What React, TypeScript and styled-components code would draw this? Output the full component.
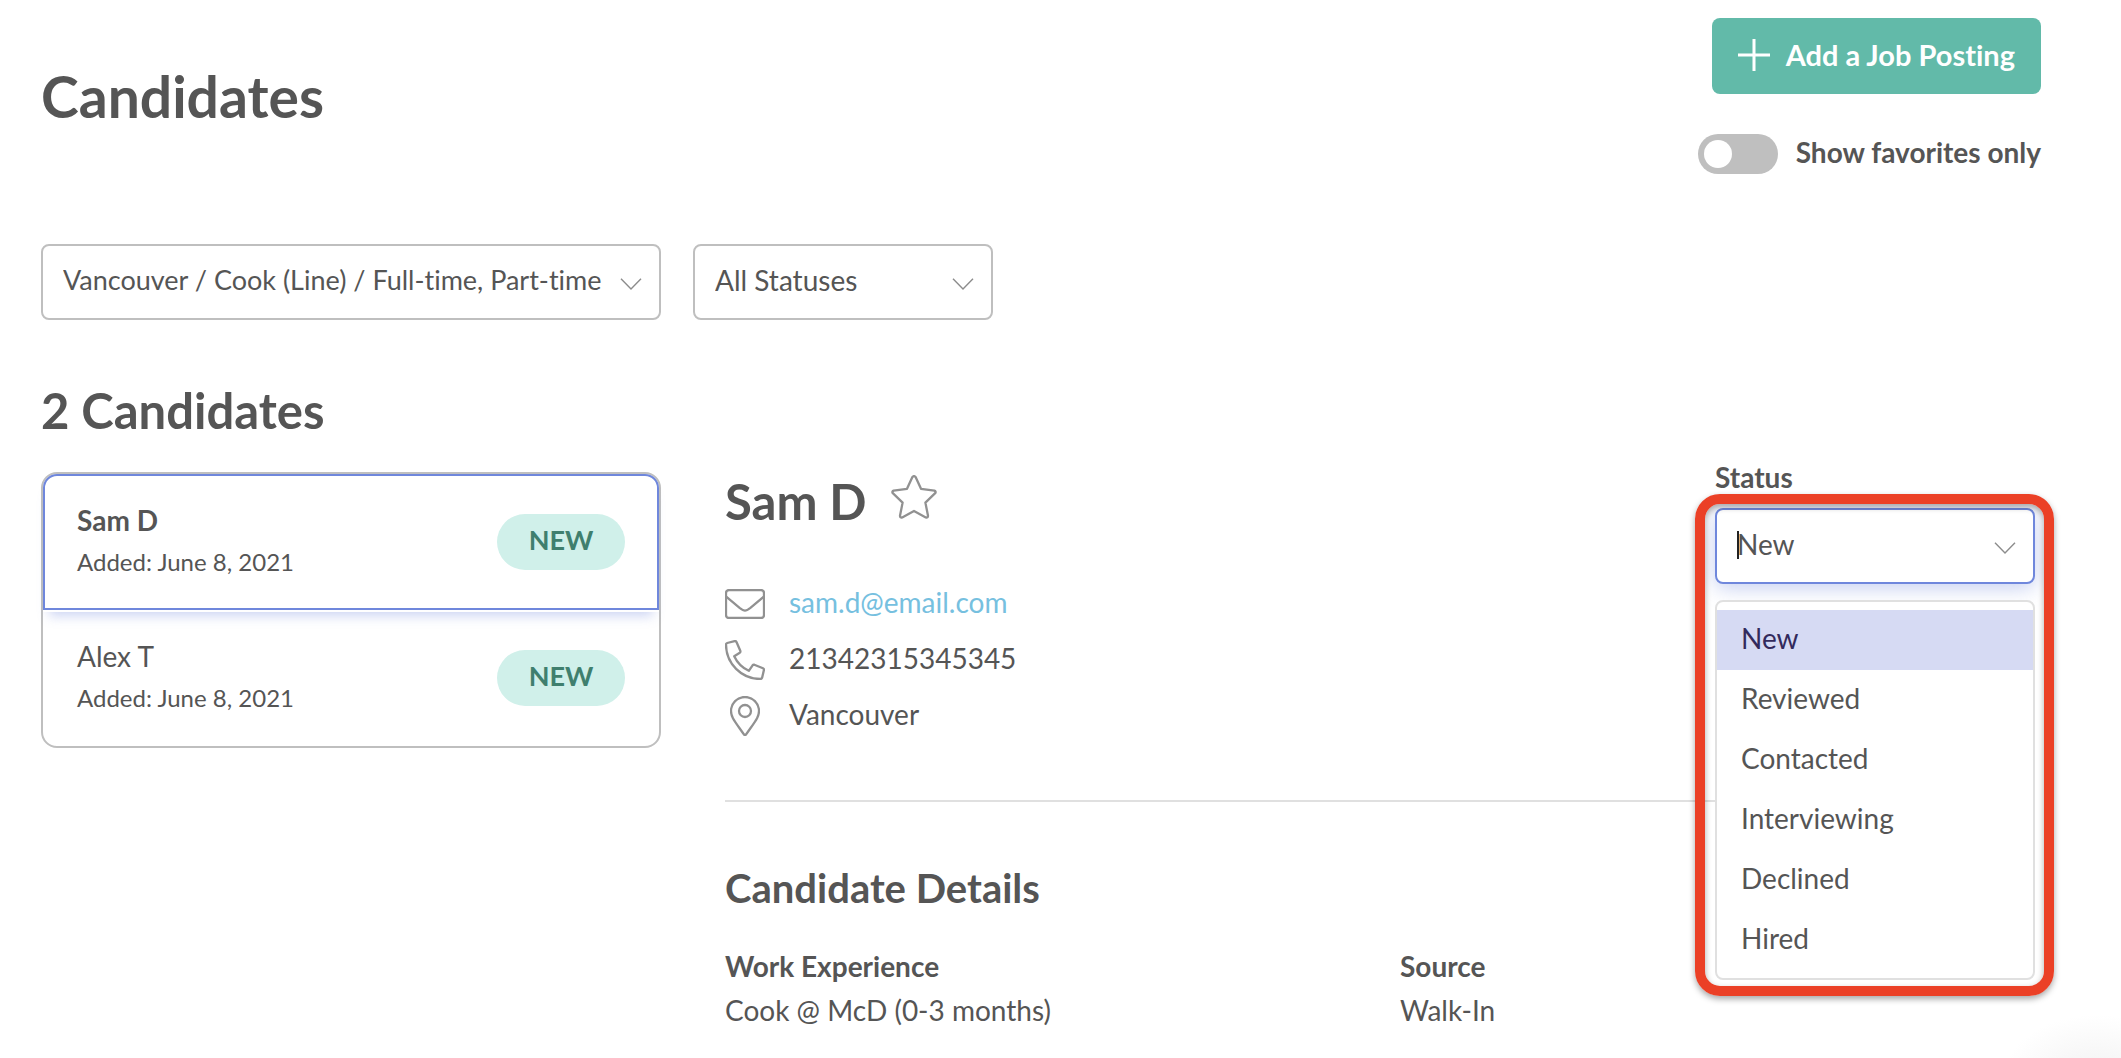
import React, { useState } from "react";
import styled, { createGlobalStyle, css } from "styled-components";

const color = {
  text: "#555555",
  border: "#bfbfbf",
  line: "#e0e0e0",
  icon: "#919191",
  blue: "#6f87dc",
  green: "#62baa9",
  link: "#76c0df",
};

const GlobalStyle = createGlobalStyle`
  *, *::before, *::after { box-sizing: border-box; }
  body {
    margin: 0;
    background: #fff;
    color: ${color.text};
    font-family: Lato, "Liberation Sans", sans-serif;
    font-size: 28px;
    line-height: 36px;
    font-variant-ligatures: no-common-ligatures;
  }
  h1, h2, h3, p, ul, dl, dd { margin: 0; padding: 0; }
  ul { list-style: none; }
  button, input, select { font: inherit; color: inherit; font-variant-ligatures: inherit; }
`;

const Page = styled.div`
  position: relative;
  min-height: 100vh;
  padding: 18px 80px 16px 41px;
  overflow: hidden;
`;

const Header = styled.header`
  display: flex;
  justify-content: space-between;
  align-items: flex-start;
`;

const Title = styled.h1`
  padding-top: 44px;
  font-size: 57px;
  line-height: 68px;
  font-weight: 700;
`;

const Actions = styled.div`
  display: flex;
  flex-direction: column;
  align-items: flex-end;
  gap: 40px;
`;

const AddButton = styled.button`
  display: flex;
  align-items: center;
  gap: 16px;
  height: 76px;
  padding: 0 26px 2px;
  border: 0;
  border-radius: 8px;
  background: ${color.green};
  color: #fff;
  font-size: 29px;
  font-weight: 700;
  cursor: pointer;
`;

const ToggleLabel = styled.label`
  display: flex;
  align-items: center;
  gap: 18px;
  height: 40px;
  font-weight: 700;
  cursor: pointer;
`;

const ToggleText = styled.span`
  padding-bottom: 4px;
`;

const Toggle = styled.input`
  appearance: none;
  display: flex;
  align-items: center;
  width: 80px;
  height: 40px;
  margin: 0;
  padding: 0 6px;
  border-radius: 20px;
  background: ${color.border};
  cursor: pointer;

  &::before {
    content: "";
    width: 28px;
    height: 28px;
    border-radius: 50%;
    background: #fff;
  }
  &:checked {
    justify-content: flex-end;
    background: ${color.green};
  }
`;

const Filters = styled.div`
  display: flex;
  gap: 32px;
  margin-top: 70px;
`;

const control = css`
  width: 100%;
  height: 76px;
  border: 2px solid ${color.border};
  border-radius: 8px;
  background: #fff;
  outline: none;
`;

const SelectBox = styled.div<{ $width: string }>`
  display: grid;
  align-items: center;
  width: ${(p) => p.$width};

  > * { grid-area: 1 / 1; }
  > svg {
    justify-self: end;
    margin: 4px 19px 0 0;
    pointer-events: none;
  }
`;

const Select = styled.select<{ $compact?: boolean }>`
  ${control}
  appearance: none;
  padding: 0 44px 4px 20px;
  font-size: ${(p) => (p.$compact ? 27 : 28)}px;
  cursor: pointer;
`;

const Columns = styled.main`
  display: grid;
  grid-template-columns: 31% minmax(0, 1fr);
  column-gap: 64px;
  margin-top: 60px;
`;

const Heading = styled.h2`
  font-size: 49px;
  line-height: 60px;
  font-weight: 700;
`;

const List = styled.ul`
  margin-top: 32px;
  border: 2px solid ${color.border};
  border-radius: 16px;
`;

const Card = styled.button<{ $selected: boolean }>`
  display: flex;
  align-items: center;
  justify-content: space-between;
  width: 100%;
  height: 136px;
  padding: 0 32px;
  border: 2px solid transparent;
  border-radius: 14px;
  background: transparent;
  text-align: left;
  cursor: pointer;

  ${(p) =>
    p.$selected &&
    css`
      border-color: ${color.blue};
      border-radius: 14px 14px 0 0;
      box-shadow: 0 2px 0 #fff, 0 12px 12px -6px rgba(111, 135, 220, 0.35);
    `}
`;

const CardText = styled.span`
  display: flex;
  flex-direction: column;
  gap: 6px;
  padding-bottom: 3px;
`;

const CardName = styled.span<{ $bold: boolean }>`
  font-weight: ${(p) => (p.$bold ? 700 : 400)};
`;

const CardDate = styled.span`
  font-size: 24px;
`;

const Badge = styled.span`
  display: flex;
  align-items: center;
  justify-content: center;
  width: 128px;
  height: 56px;
  padding-bottom: 4px;
  border-radius: 28px;
  background: #d0f0ea;
  color: #3f7f6e;
  font-size: 27px;
  font-weight: 700;
`;

const Detail = styled.section`
  padding: 80px 6px 0 0;
`;

const DetailTop = styled.div`
  display: flex;
  justify-content: space-between;
  align-items: flex-start;
  height: 340px;
`;

const NameRow = styled.div`
  display: flex;
  align-items: flex-start;
  gap: 24px;
  padding-top: 11px;
`;

const StarButton = styled.button`
  display: flex;
  padding: 4px 0 0;
  border: 0;
  background: none;
  cursor: pointer;
`;

const Contacts = styled.ul`
  display: flex;
  flex-direction: column;
  margin-top: 45px;
`;

const Contact = styled.li`
  display: grid;
  grid-template-columns: 40px auto;
  justify-items: center;
  align-items: center;
  column-gap: 24px;
  height: 56px;

  > :last-child {
    justify-self: start;
    padding-bottom: 4px;
  }
`;

const MailLink = styled.a`
  color: ${color.link};
  text-decoration: none;
`;

const StatusField = styled.div`
  position: relative;
  width: 320px;
`;

const StatusLabel = styled.label`
  display: block;
  height: 48px;
  line-height: 34px;
  font-size: 28px;
  font-weight: 700;
`;

const StatusInput = styled.input`
  ${control}
  border-color: ${color.blue};
  padding: 0 56px 4px 20px;
  box-shadow: 0 4px 20px rgba(111, 135, 220, 0.4);
`;

const Caret = styled.span`
  width: 2px;
  height: 28px;
  margin: 0 0 2px 22px;
  background: #222;
`;

const Menu = styled.ul`
  position: absolute;
  z-index: 2;
  top: calc(100% + 16px);
  left: 0;
  right: 0;
  padding: 8px 0;
  border: 2px solid ${color.line};
  border-radius: 8px;
  background: #fff;
`;

const Option = styled.li<{ $active: boolean }>`
  height: 60px;
  padding: 0 24px;
  line-height: 56px;
  background: ${(p) => (p.$active ? "#d6daf3" : "transparent")};
  color: ${(p) => (p.$active ? "#332a5c" : "inherit")};
  cursor: pointer;
`;

const Highlight = styled.div`
  position: absolute;
  z-index: 3;
  top: 34px;
  left: -20px;
  right: -19px;
  height: 502px;
  border: 10px solid #eb4026;
  border-radius: 25px;
  box-shadow: 0 3px 6px rgba(0, 0, 0, 0.35), inset 0 3px 6px rgba(0, 0, 0, 0.35);
  pointer-events: none;
`;

const Details = styled.section`
  border-top: 2px solid ${color.line};
  padding-top: 61px;
`;

const SubHeading = styled.h3`
  font-size: 40px;
  line-height: 50px;
  font-weight: 700;
`;

const Facts = styled.dl`
  display: grid;
  grid-template-columns: 1fr 1fr;
  column-gap: 40px;
  margin-top: 31px;
`;

const Fact = styled.div`
  line-height: 44px;
`;

const Term = styled.dt`
  font-weight: 700;
`;

const CornerShade = styled.div`
  position: absolute;
  right: 0;
  bottom: 0;
  width: 140px;
  height: 60px;
  background: radial-gradient(95px 68px at 115px 85px, #f1f1f1, #fff);
`;

const Chevron = () => (
  <svg width="22" height="12" viewBox="0 0 22 12" fill="none" stroke="#8c8c8c" strokeWidth="1.4" aria-hidden="true">
    <path d="M1 0.8 11 11 21 0.8" />
  </svg>
);

const Plus = () => (
  <svg width="32" height="32" viewBox="0 0 32 32" stroke="#fff" strokeWidth="3" aria-hidden="true">
    <path d="M16 0v32M0 16h32" />
  </svg>
);

const outline = { fill: "none", stroke: color.icon, strokeWidth: 2.3, strokeLinejoin: "round" as const };

const Star = () => (
  <svg width="46" height="44" viewBox="0 0 46 44" {...outline} aria-hidden="true">
    <path d="M21.4 2Q23 .2 24.6 2L30 13.8 43.4 15.6Q45.4 16.6 44.2 18.2L34.4 27.6 37 40.8Q36.8 43 34.8 42.4L23 36 11.2 42.4Q9.2 43 9 40.8L11.6 27.6 1.8 18.2Q.6 16.6 2.6 15.6L16 13.8Z" />
  </svg>
);

const Envelope = () => (
  <svg width="40" height="30" viewBox="0 0 40 30" {...outline} aria-hidden="true">
    <rect x="1" y="1" width="38" height="28" rx="3" />
    <path d="M1.2 7.6 14.6 18.8C17.4 21 18.8 21.6 20 21.6S22.6 21 25.4 18.8L38.8 7.6" />
  </svg>
);

const Phone = () => (
  <svg width="40" height="40" viewBox="0 0 40 40" {...outline} aria-hidden="true">
    <path d="M2.2 3 9.6 1.1Q11 .8 11.6 2.2L15.3 10.8Q15.7 12 14.8 12.7L9.2 16.2C12.4 23 17 27.6 23.8 30.8L27.6 25.3Q28.3 24.4 29.3 24.7L38 28.3Q39.2 28.9 38.9 30.1L37.1 37.7Q36.7 39 35.4 39C16.4 39 1 23.6 1 4.6Q1 3.4 2.2 3Z" />
  </svg>
);

const Pin = () => (
  <svg width="30" height="40" viewBox="0 0 30 40" {...outline} aria-hidden="true">
    <path d="M13.9 38.4C4 24.2 1 21 1 15a14 14 0 0 1 28 0c0 6-3 9.2-12.9 23.4Q15 39.6 13.9 38.4Z" />
    <circle cx="15" cy="15" r="6" />
  </svg>
);

const candidates = [
  { name: "Sam D", added: "June 8, 2021", status: "NEW" },
  { name: "Alex T", added: "June 8, 2021", status: "NEW" },
];

const statuses = ["New", "Reviewed", "Contacted", "Interviewing", "Declined", "Hired"];

export default function App() {
  const [selected, setSelected] = useState(0);
  const [status, setStatus] = useState("New");

  return (
    <>
      <GlobalStyle />
      <Page>
        <CornerShade />
        <Header>
          <Title>Candidates</Title>
          <Actions>
            <AddButton type="button">
              <Plus />
              Add a Job Posting
            </AddButton>
            <ToggleLabel>
              <Toggle type="checkbox" role="switch" />
              <ToggleText>Show favorites only</ToggleText>
            </ToggleLabel>
          </Actions>
        </Header>

        <Filters>
          <SelectBox $width="31%">
            <Select aria-label="Job posting" $compact>
              <option>Vancouver / Cook (Line) / Full-time, Part-time</option>
            </Select>
            <Chevron />
          </SelectBox>
          <SelectBox $width="15%">
            <Select aria-label="Candidate status">
              <option>All Statuses</option>
            </Select>
            <Chevron />
          </SelectBox>
        </Filters>

        <Columns>
          <section>
            <Heading>2 Candidates</Heading>
            <List>
              {candidates.map((c, i) => (
                <li key={c.name}>
                  <Card type="button" $selected={i === selected} onClick={() => setSelected(i)}>
                    <CardText>
                      <CardName $bold={i === selected}>{c.name}</CardName>
                      <CardDate>Added: {c.added}</CardDate>
                    </CardText>
                    <Badge>{c.status}</Badge>
                  </Card>
                </li>
              ))}
            </List>
          </section>

          <Detail>
            <DetailTop>
              <div>
                <NameRow>
                  <Heading>Sam D</Heading>
                  <StarButton type="button" aria-label="Add to favorites">
                    <Star />
                  </StarButton>
                </NameRow>
                <Contacts>
                  <Contact>
                    <Envelope />
                    <MailLink href="mailto:sam.d@email.com">sam.d@email.com</MailLink>
                  </Contact>
                  <Contact>
                    <Phone />
                    <span>21342315345345</span>
                  </Contact>
                  <Contact>
                    <Pin />
                    <span>Vancouver</span>
                  </Contact>
                </Contacts>
              </div>

              <StatusField>
                <StatusLabel htmlFor="status">Status</StatusLabel>
                <SelectBox $width="100%">
                  <StatusInput
                    id="status"
                    role="combobox"
                    aria-expanded="true"
                    aria-controls="status-menu"
                    value={status}
                    readOnly
                  />
                  <Caret />
                  <Chevron />
                </SelectBox>
                <Menu id="status-menu" role="listbox">
                  {statuses.map((s) => (
                    <Option
                      key={s}
                      role="option"
                      aria-selected={s === status}
                      $active={s === status}
                      onClick={() => setStatus(s)}
                    >
                      {s}
                    </Option>
                  ))}
                </Menu>
                <Highlight />
              </StatusField>
            </DetailTop>

            <Details>
              <SubHeading>Candidate Details</SubHeading>
              <Facts>
                <Fact>
                  <Term>Work Experience</Term>
                  <dd>Cook @ McD (0-3 months)</dd>
                </Fact>
                <Fact>
                  <Term>Source</Term>
                  <dd>Walk-In</dd>
                </Fact>
              </Facts>
            </Details>
          </Detail>
        </Columns>
      </Page>
    </>
  );
}
